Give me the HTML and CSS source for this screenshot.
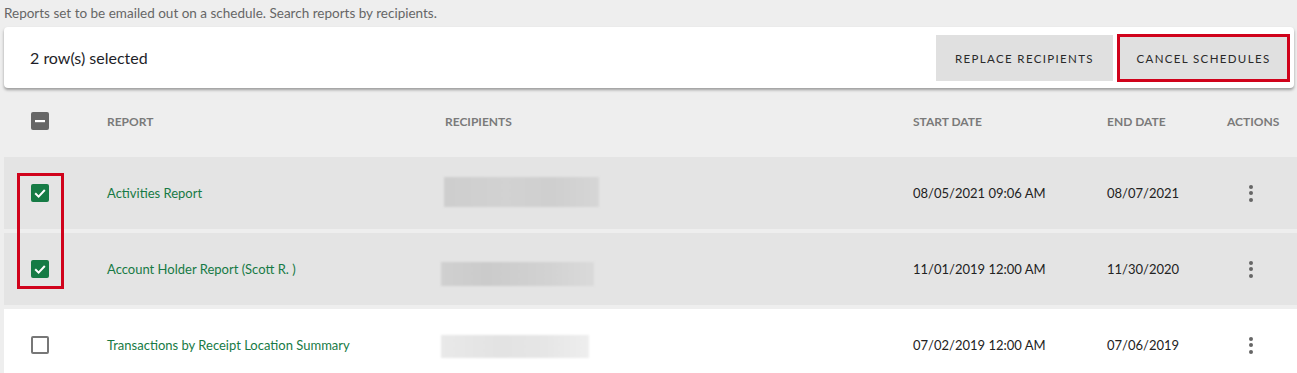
FILE: index.html
```html
<!DOCTYPE html>
<html>
<head>
<meta charset="utf-8">
<link rel="stylesheet" href="styles.css">
</head>
<body>
<p class="intro">Reports set to be emailed out on a schedule. Search reports by recipients.</p>
<div class="toolbar">
  <span class="selected">2 row(s) selected</span>
  <div class="actions-bar">
    <button class="btn">REPLACE RECIPIENTS</button>
    <button class="btn btn-highlight">CANCEL SCHEDULES</button>
  </div>
</div>
<div class="table">
  <div class="row head">
    <div class="cell cb"><span class="check indeterminate"><svg viewBox="0 0 18 18" width="18" height="18"><rect x="4" y="8" width="10" height="2.2" fill="#fff"/></svg></span></div>
    <div class="cell">REPORT</div>
    <div class="cell">RECIPIENTS</div>
    <div class="cell">START DATE</div>
    <div class="cell">END DATE</div>
    <div class="cell">ACTIONS</div>
  </div>
  <div class="row selected-row">
    <div class="cell cb"><span class="check checked"><svg viewBox="0 0 18 18" width="18" height="18"><path d="M4.2 9.3 L7.6 12.6 L13.8 6" fill="none" stroke="#fff" stroke-width="2"/></svg></span></div>
    <div class="cell link">Activities Report</div>
    <div class="cell"><span class="blur blur1"></span></div>
    <div class="cell date">08/05/2021 09:06 AM</div>
    <div class="cell date">08/07/2021</div>
    <div class="cell"><span class="kebab"><i></i><i></i><i></i></span></div>
  </div>
  <div class="row selected-row">
    <div class="cell cb"><span class="check checked"><svg viewBox="0 0 18 18" width="18" height="18"><path d="M4.2 9.3 L7.6 12.6 L13.8 6" fill="none" stroke="#fff" stroke-width="2"/></svg></span></div>
    <div class="cell link">Account Holder Report (Scott R. )</div>
    <div class="cell"><span class="blur blur2"></span></div>
    <div class="cell date">11/01/2019 12:00 AM</div>
    <div class="cell date">11/30/2020</div>
    <div class="cell"><span class="kebab"><i></i><i></i><i></i></span></div>
  </div>
  <div class="row plain-row">
    <div class="cell cb"><span class="check empty"></span></div>
    <div class="cell link">Transactions by Receipt Location Summary</div>
    <div class="cell"><span class="blur blur3"></span></div>
    <div class="cell date">07/02/2019 12:00 AM</div>
    <div class="cell date">07/06/2019</div>
    <div class="cell"><span class="kebab"><i></i><i></i><i></i></span></div>
  </div>
  <div class="annot"></div>
</div>
</body>
</html>
```
FILE: styles.css
```css
html, body {
  margin: 0;
  padding: 0;
  background: #eeeeee;
  font-family: Lato, "Noto Sans", sans-serif;
  overflow: hidden;
}
.intro {
  margin: 0;
  padding: 0 4px;
  height: 27px;
  line-height: 27px;
  font-size: 13.5px;
  color: #666;
}
.toolbar {
  margin: 0 3px 0 4px;
  height: 61px;
  background: #fff;
  border-radius: 4px;
  box-shadow: 0 2px 3px rgba(0,0,0,0.35);
  display: flex;
  align-items: center;
  justify-content: space-between;
  padding: 0 4px 0 26px;
  box-sizing: border-box;
}
.selected {
  font-size: 16px;
  color: #1e1e28;
}
.actions-bar {
  display: flex;
  align-items: center;
  gap: 4px;
  padding-top: 1px;
}
.btn {
  font-family: Lato, "Noto Sans", sans-serif;
  font-size: 11.5px;
  letter-spacing: 1.35px;
  color: #2a2a2a;
  background: #e0e0e0;
  border: none;
  height: 46px;
  width: 177px;
  padding: 0;
  border-radius: 0;
}
.btn-highlight {
  width: 173px;
  height: 48px;
  box-shadow: inset 0 0 0 3px #d0021b;
}
.table {
  position: relative;
  margin: 1px 0 0 4px;
  display: flex;
  flex-direction: column;
  gap: 4px;
}
.row {
  display: grid;
  grid-template-columns: 103px 338px 468px 194px 120px 1fr;
  align-items: center;
  height: 72px;
}
.row.head {
  height: 64px;
  font-size: 12px;
  font-weight: bold;
  color: #7a7a7a;
}
.selected-row { background: #e4e4e4; }
.plain-row { background: #fff; }
.cell { font-size: inherit; }
.cb { padding-left: 27px; display: flex; }
.check {
  width: 18px;
  height: 18px;
  box-sizing: border-box;
  border-radius: 2px;
  display: block;
}
.check svg { display: block; }
.indeterminate { background: #666; }
.checked { background: #167b45; }
.empty { border: 2px solid #777; background: #fff; }
.link {
  font-size: 13px;
  color: #177a45;
}
.date {
  font-size: 13px;
  color: #222;
}
.blur {
  display: block;
  filter: blur(1px);
}
.blur1 {
  width: 155px; height: 30px; margin-left: -1px; margin-top: -2px;
  background: linear-gradient(90deg, #cecece, #d2d2d2 40%, #cfcfcf 70%, #d6d6d6);
}
.blur2 {
  width: 153px; height: 24px; margin-left: -4px; margin-top: 10px;
  background: linear-gradient(90deg, #d0d0d0, #cbcbcb 30%, #d2d2d2 70%, #dadada);
}
.blur3 {
  width: 148px; height: 23px; margin-left: -4px; margin-top: 3px;
  background: linear-gradient(90deg, #e9e9e9, #e3e3e3 40%, #e6e6e6 70%, #eeeeee);
}
.kebab {
  display: flex;
  flex-direction: column;
  gap: 2.5px;
  width: 4px;
  margin-left: 22px;
}
.kebab i {
  display: block;
  width: 4px;
  height: 4px;
  border-radius: 50%;
  background: #666;
}
.annot {
  position: absolute;
  left: 13px;
  top: 84px;
  width: 47px;
  height: 116px;
  box-sizing: border-box;
  border: 3px solid #d0021b;
}
```
